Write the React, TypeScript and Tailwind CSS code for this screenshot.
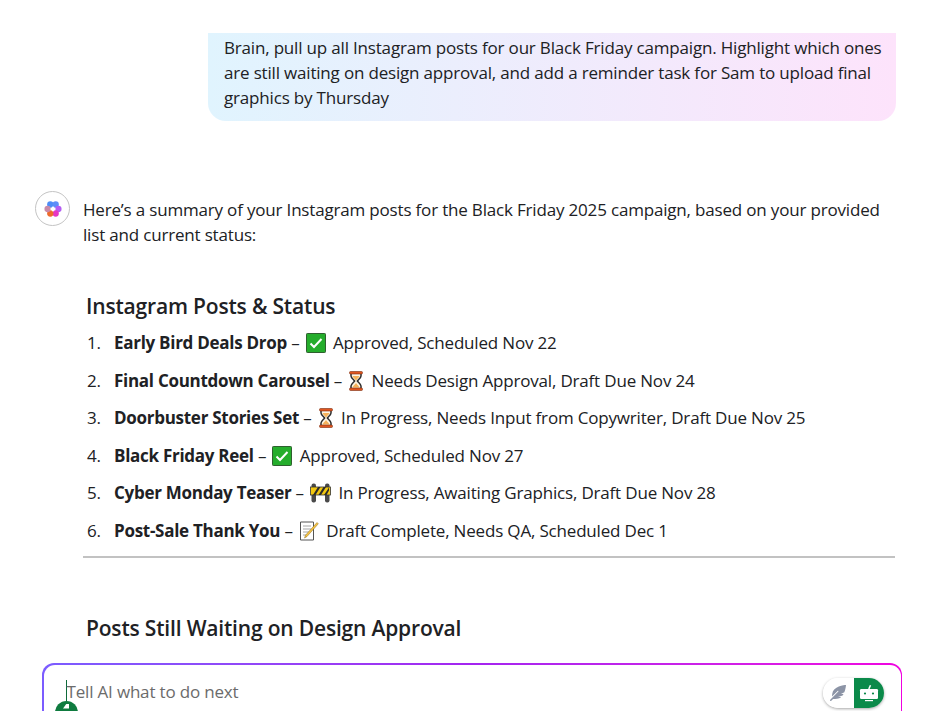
import { FaFeatherAlt } from "react-icons/fa";

function CheckEmoji() {
  return (
    <svg width="20" height="20" viewBox="0 0 20 20" className="mr-[3px] ml-[2px] inline-block align-[-4px]">
      <rect x="0.5" y="0.5" width="19" height="19" rx="0.8" fill="#25ad2c" stroke="#2f5f2f" />
      <path d="M4.5 10.5l3.5 3.5 7.5-8" fill="none" stroke="#fff" strokeWidth="2" />
    </svg>
  );
}

function HourglassEmoji() {
  return (
    <svg width="16" height="20" viewBox="0 0 16 20" className="mr-[3px] ml-[2px] inline-block align-[-4px]">
      <path d="M3 2h10v3c0 2-3 4-3.600 5 .6 1 3.600 3 3.600 5v3H3v-3c0-2 3-4 3.600-5C6 9 3 7 3 5z" fill="#fff6e6" stroke="#2e2e2e" strokeWidth="1.500" />
      <path d="M4.500 5h7c-.5 1.500-2.600 3-3.500 4.500C7.100 8 5 6.500 4.500 5z" fill="#f5b25a" />
      <path d="M4.500 16.500c.3-1.500 2.500-2.800 3.500-4.500 1 1.700 3.200 3 3.500 4.500z" fill="#f5b25a" />
      <rect x="1.500" y="0.500" width="13" height="2.500" rx="1" fill="#e0561f" stroke="#7a2c10" strokeWidth="0.6" />
      <rect x="1.500" y="17" width="13" height="2.500" rx="1" fill="#e0561f" stroke="#7a2c10" strokeWidth="0.6" />
    </svg>
  );
}

function BarrierEmoji() {
  return (
    <svg width="21" height="20" viewBox="0 0 21 20" className="mr-[3px] ml-[2px] inline-block align-[-4px]">
      <rect x="1.500" y="0.500" width="4.500" height="19" rx="2" fill="#4a4a4a" />
      <rect x="15" y="0.500" width="4.500" height="19" rx="2" fill="#4a4a4a" />
      <rect x="0.500" y="4" width="20" height="8" fill="#f2c811" stroke="#333" strokeWidth="0.8" />
      <path d="M3 12l5-8h2.500l-5 8zM8.500 12l5-8H16l-5 8zM14 12l5-7.500v3L16.500 12z" fill="#2b2b2b" />
    </svg>
  );
}

function MemoEmoji() {
  return (
    <svg width="20" height="20" viewBox="0 0 20 20" className="mr-[3px] ml-[2px] inline-block align-[-4px]">
      <path d="M1.500 1h13v18h-13z" fill="#fff" stroke="#555" />
      <path d="M4 5h8M4 8h8M4 11h6M4 14h4" stroke="#a5a5a5" />
      <path d="M18 1.500l1.300 1.300L8 15.500 5.500 17l1-2.800z" fill="#f6c343" stroke="#8a6a1c" strokeWidth="0.5" />
    </svg>
  );
}

function BrainLogo() {
  return (
    <svg width="18" height="18" viewBox="0 0 20 20">
      <circle cx="7" cy="5" r="3.500" fill="#4d8df7" />
      <circle cx="13" cy="5" r="3.500" fill="#5c8ef8" />
      <circle cx="16" cy="10" r="3.500" fill="#b45cf2" />
      <circle cx="13" cy="15" r="3.500" fill="#e636c4" />
      <circle cx="7" cy="15" r="3.500" fill="#ee6a2c" />
      <circle cx="4" cy="10" r="3.500" fill="#c98aa8" />
      <path d="M8.800 8.800V7.500h2.400v1.300h1.300v2.400h-1.300v1.300H8.800v-1.300H7.500V8.800z" fill="#fff" />
    </svg>
  );
}

function BotIcon() {
  return (
    <svg width="20" height="20" viewBox="0 0 20 20">
      <path d="M9.800 6l1.700-3.800" stroke="#fff" strokeWidth="1.500" fill="none" />
      <rect x="1" y="6" width="18" height="10" rx="1.200" fill="#fff" />
      <circle cx="6" cy="10.500" r="1.100" fill="#0b8a4a" />
      <circle cx="14" cy="10.500" r="1.100" fill="#0b8a4a" />
      <rect x="6" y="17" width="8" height="1.200" fill="#fff" />
    </svg>
  );
}

const posts = [
  { title: "Early Bird Deals Drop", icon: <CheckEmoji />, status: "Approved, Scheduled Nov 22" },
  { title: "Final Countdown Carousel", icon: <HourglassEmoji />, status: "Needs Design Approval, Draft Due Nov 24" },
  { title: "Doorbuster Stories Set", icon: <HourglassEmoji />, status: "In Progress, Needs Input from Copywriter, Draft Due Nov 25" },
  { title: "Black Friday Reel", icon: <CheckEmoji />, status: "Approved, Scheduled Nov 27" },
  { title: "Cyber Monday Teaser", icon: <BarrierEmoji />, status: "In Progress, Awaiting Graphics, Draft Due Nov 28" },
  { title: "Post-Sale Thank You", icon: <MemoEmoji />, status: "Draft Complete, Needs QA, Scheduled Dec 1" },
];

export default function App() {
  return (
    <div className="h-[711px] w-[926px] overflow-hidden bg-white font-['Open_Sans',sans-serif] text-[17px] leading-[25px] tracking-[-0.18px] text-[#202124]">
      <div className="pt-[33px] pl-[208px] pr-[30px]">
        <div className="rounded-b-[18px] bg-gradient-to-r from-[#e0f4fe] to-[#fde3fb] pl-4 pr-[10px] pt-[2px] pb-[11px]">
          Brain, pull up all Instagram posts for our Black Friday campaign. Highlight which ones are still waiting on design approval, and add a reminder task for Sam to upload final graphics by Thursday
        </div>
      </div>

      <div className="mt-[70px] flex gap-[13px] pl-[35px] pr-[31px]">
        <div className="flex h-[35px] w-[35px] shrink-0 items-center justify-center rounded-full border border-[#c4c4c4]">
          <BrainLogo />
        </div>
        <div className="flex-1 pt-[6px]">
          <p>Here’s a summary of your Instagram posts for the Black Friday 2025 campaign, based on your provided list and current status:</p>

          <h2 className="mt-[45px] ml-[3px] text-[21px] leading-[28px] font-semibold">Instagram Posts &amp; Status</h2>

          <ol className="mt-[10px]">
            {posts.map((post, i) => (
              <li key={post.title} className="mb-[12.500px] flex">
                <span className="w-[31px] pl-[4px]">{i + 1}.</span>
                <span>
                  <strong className="font-bold tracking-[-0.28px]">{post.title}</strong> – {post.icon} {post.status}
                </span>
              </li>
            ))}
          </ol>

          <hr className="mt-[13.500px] border-t-2 border-[#c2c2c2]" />

          <h2 className="mt-[56px] ml-[3px] text-[21px] leading-[28px] font-semibold">Posts Still Waiting on Design Approval</h2>
        </div>
      </div>

      <div className="mt-[21px] ml-[42px] mr-[24px] rounded-[12px] bg-gradient-to-r from-[#7b5cff] via-[#a424f0] to-[#f000e0] p-[1.500px]">
        <div className="relative h-[80px] rounded-[11px] bg-white pl-[22px] pt-[14px]">
          <span className="border-l border-[#0f6b3a] text-[#6b6b6b]">Tell AI what to do next</span>
          <div className="absolute top-[36px] left-[11px] flex h-[23px] w-[23px] justify-center rounded-full bg-[#0f7b3f] pt-[3px]">
            <div className="h-[5px] w-[6px] bg-white [clip-path:polygon(60%_0,100%_0,100%_100%,0_100%)]" />
          </div>
          <div className="absolute top-[13px] right-[17px] flex h-[30px] w-[61px] overflow-hidden rounded-full shadow-[0_1px_3px_rgba(0,0,0,0.35)]">
            <div className="flex w-[31px] items-center justify-center bg-white text-[#8c94a6]">
              <FaFeatherAlt size={16} />
            </div>
            <div className="flex w-[30px] items-center justify-center bg-[#0b8a4a]">
              <BotIcon />
            </div>
          </div>
        </div>
      </div>
    </div>
  );
}
